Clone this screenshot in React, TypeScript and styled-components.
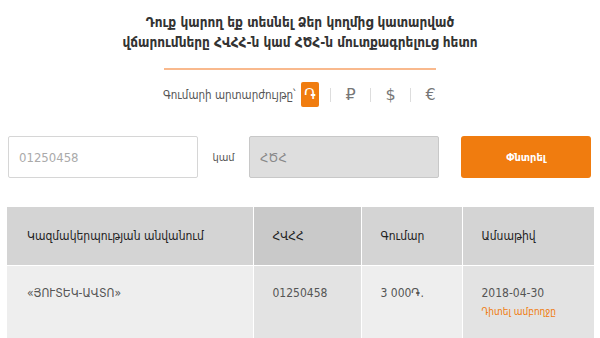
import * as React from 'react';
import styled, { createGlobalStyle } from 'styled-components';

const GlobalStyle = createGlobalStyle`
  body {
    margin: 0;
    background: #fff;
    font-family: 'DejaVu Sans Condensed', 'DejaVu Sans', sans-serif;
  }
`;

const currencies = ['֏', '₽', '$', '€'];

const rows = [
  {
    name: '«ՅՈՒՏԵԿ-ԱՎՏՈ»',
    tin: '01250458',
    amount: '3 000֏.',
    date: '2018-04-30',
  },
];

export default function App() {
  const [active, setActive] = React.useState(0);

  return (
    <Page>
      <GlobalStyle />
      <Title>
        Դուք կարող եք տեսնել Ձեր կողմից կատարված
        <br />
        վճարումները ՀՎՀՀ-ն կամ ՀԾՀ-ն մուտքագրելուց հետո
      </Title>
      <Divider />
      <CurrencyRow>
        <CurrencyLabel>Գումարի արտարժույթը՝</CurrencyLabel>
        {currencies.map((c, i) => (
          <React.Fragment key={c}>
            {i > 0 && <Separator />}
            <CurrencyButton $active={i === active} onClick={() => setActive(i)}>
              {c}
            </CurrencyButton>
          </React.Fragment>
        ))}
      </CurrencyRow>
      <SearchRow>
        <Input placeholder="01250458" />
        <Or>կամ</Or>
        <Input placeholder="ՀԾՀ" $disabled disabled />
        <SearchButton>Փնտրել</SearchButton>
      </SearchRow>
      <Table>
        <colgroup>
          <col style={{ width: 246 }} />
          <col style={{ width: 108 }} />
          <col style={{ width: 101 }} />
          <col />
        </colgroup>
        <thead>
          <tr>
            <Th>Կազմակերպության անվանում</Th>
            <Th $dark>ՀՎՀՀ</Th>
            <Th>Գումար</Th>
            <Th>Ամսաթիվ</Th>
          </tr>
        </thead>
        <tbody>
          {rows.map(r => (
            <tr key={r.tin}>
              <Td>{r.name}</Td>
              <Td $dark>{r.tin}</Td>
              <Td>{r.amount}</Td>
              <Td $dark>
                {r.date}
                <MoreLink href="#">Դիտել ամբողջը</MoreLink>
              </Td>
            </tr>
          ))}
        </tbody>
      </Table>
    </Page>
  );
}

const Page = styled.div`
  width: 600px;
  height: 338px;
  overflow: hidden;
`;

const Title = styled.h1`
  margin: 0;
  padding-top: 12px;
  font-size: 13.5px;
  line-height: 20px;
  font-weight: bold;
  text-align: center;
  color: #333;
`;

const Divider = styled.div`
  width: 272px;
  height: 2px;
  margin: 16px auto 0;
  background: #f9b98d;
`;

const CurrencyRow = styled.div`
  display: flex;
  align-items: center;
  gap: 11px;
  height: 25px;
  margin: 12px 0 0 163px;
`;

const CurrencyLabel = styled.span`
  font-size: 11.5px;
  color: #555;
  margin-right: 0;
  width: 127px;
  white-space: nowrap;
`;

const Separator = styled.span`
  width: 1px;
  height: 14px;
  background: #ddd;
`;

const CurrencyButton = styled.button<{ $active?: boolean }>`
  width: ${p => (p.$active ? '18px' : '17px')};
  height: 25px;
  padding: 0;
  border: none;
  border-radius: 2px;
  font-family: 'DejaVu Sans', sans-serif;
  font-size: 16px;
  background: ${p => (p.$active ? '#f07c0f' : 'transparent')};
  color: ${p => (p.$active ? '#fff' : '#777')};
  cursor: pointer;
`;

const SearchRow = styled.div`
  display: flex;
  align-items: center;
  margin-top: 29px;
  padding: 0 9px 0 8px;
`;

const Input = styled.input<{ $disabled?: boolean }>`
  box-sizing: border-box;
  width: 190px;
  height: 42px;
  padding: 0 10px;
  border: 1px solid ${p => (p.$disabled ? '#c8c8c8' : '#d6d6d6')};
  border-radius: 2px;
  background: ${p => (p.$disabled ? '#dedede' : '#fff')};
  font-family: 'DejaVu Sans Condensed', sans-serif;
  font-size: 13px;
  color: #555;
  &::placeholder {
    color: ${p => (p.$disabled ? '#888' : '#aaa')};
  }
`;

const Or = styled.span`
  width: 51px;
  text-align: center;
  font-size: 11px;
  color: #555;
`;

const SearchButton = styled.button`
  width: 130px;
  height: 42px;
  margin-left: auto;
  border: none;
  border-radius: 3px;
  background: #f07c0f;
  color: #fff;
  font-family: 'DejaVu Sans Condensed', sans-serif;
  font-weight: bold;
  font-size: 11px;
  cursor: pointer;
`;

const Table = styled.table`
  width: 587px;
  margin: 29px 0 0 7px;
  border-collapse: collapse;
  table-layout: fixed;
  font-size: 12px;
`;

const Th = styled.th<{ $dark?: boolean }>`
  height: 58px;
  padding: 0 0 0 19px;
  text-align: left;
  font-weight: normal;
  color: #222;
  background: ${p => (p.$dark ? '#c9c9c9' : '#d4d4d4')};
  border-left: 1px solid #fff;
  border-bottom: 1px solid #fff;
  &:first-child {
    border-left: none;
    padding-left: 20px;
  }
`;

const Td = styled.td<{ $dark?: boolean }>`
  height: 80px;
  padding: 20px 0 0 19px;
  vertical-align: top;
  color: #555;
  font-size: 12px;
  background: ${p => (p.$dark ? '#e3e3e3' : '#eeeeee')};
  border-left: 1px solid #fff;
  &:first-child {
    border-left: none;
    padding-left: 20px;
  }
`;

const MoreLink = styled.a`
  display: block;
  margin-top: 6px;
  font-size: 10px;
  color: #f07c0f;
  text-decoration: none;
`;
